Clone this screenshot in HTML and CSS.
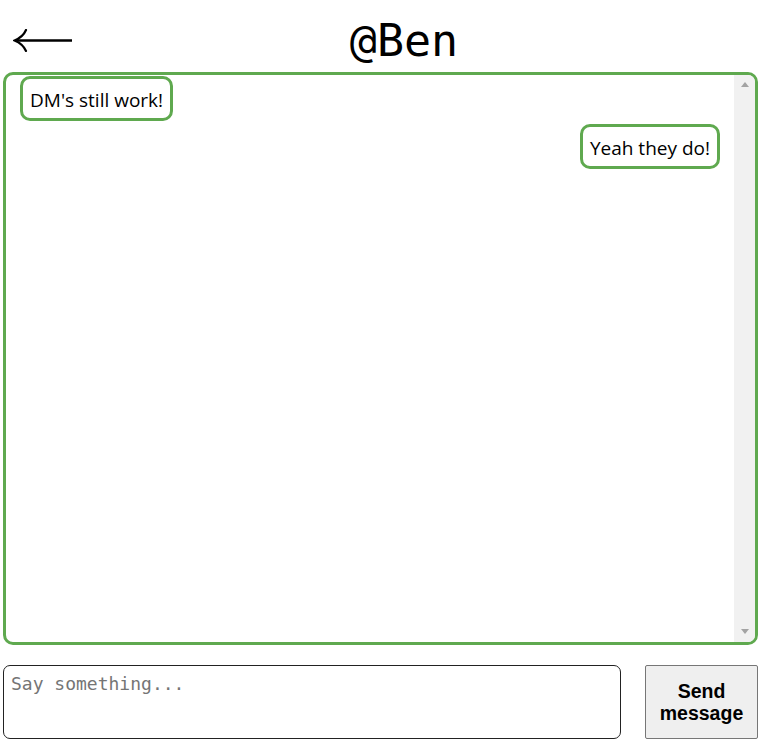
FILE: index.html
```html
<!DOCTYPE html>
<html>
<head>
<meta charset="utf-8">
<link rel="stylesheet" href="styles.css">
</head>
<body>
<div class="page">
  <header class="header">
    <svg class="back" width="60" height="23" viewBox="0 0 60 23" aria-label="Back">
      <path d="M13,1 Q10,8 1.5,11.5 Q10,15 13,22" fill="none" stroke="#000" stroke-width="2.2" stroke-linecap="round"/>
      <line x1="2" y1="11.5" x2="59" y2="11.5" stroke="#000" stroke-width="2.4"/>
    </svg>
    <h1 class="title">@Ben</h1>
  </header>
  <section class="chat">
    <div class="messages">
      <div class="bubble left">DM's still work!</div>
      <div class="bubble right">Yeah they do!</div>
    </div>
    <div class="scrollbar">
      <span class="arrow up"></span>
      <span class="arrow down"></span>
    </div>
  </section>
  <form class="composer">
    <textarea class="input" placeholder="Say something..."></textarea>
    <button type="button" class="send">Send message</button>
  </form>
</div>
</body>
</html>
```
FILE: styles.css
```css
html, body {
  margin: 0;
  padding: 0;
  background: #fff;
}
.page {
  width: 755px;
  margin-left: 3px;
  display: flex;
  flex-direction: column;
}
.header {
  height: 72px;
  box-sizing: border-box;
  display: flex;
  align-items: flex-start;
  padding-top: 15px;
}
.back {
  display: block;
  margin-left: 10px;
  margin-top: 14px;
  flex: none;
}
.title {
  flex: 1;
  margin: 0;
  padding-right: 23px;
  text-align: center;
  font-family: "DejaVu Sans Mono", monospace;
  font-weight: normal;
  font-size: 45px;
  line-height: 52px;
  color: #000;
}
.chat {
  height: 573px;
  box-sizing: border-box;
  border: 3px solid #5fa94f;
  border-radius: 10px;
  display: flex;
  overflow: hidden;
}
.messages {
  flex: 1;
  padding: 1px 14px;
  display: flex;
  flex-direction: column;
  gap: 3px;
}
.bubble {
  border: 3px solid #5fa94f;
  border-radius: 10px;
  padding: 9px 7px 6px;
  font-family: "Open Sans", sans-serif;
  font-size: 19px;
  line-height: 24px;
  color: #000;
}
.left { align-self: flex-start; }
.right { align-self: flex-end; }
.scrollbar {
  width: 21px;
  flex: none;
  background: #f1f1f1;
  display: flex;
  flex-direction: column;
  justify-content: space-between;
  align-items: center;
  padding: 7px 0 8px;
  box-sizing: border-box;
}
.arrow {
  width: 0;
  height: 0;
  border-left: 4.5px solid transparent;
  border-right: 4.5px solid transparent;
}
.up { border-bottom: 5px solid #a3a3a3; }
.down { border-top: 5px solid #a3a3a3; }
.composer {
  margin: 20px 0 0;
  display: flex;
  gap: 24px;
}
.input {
  flex: 1;
  height: 74px;
  box-sizing: border-box;
  border: 1px solid #222;
  border-radius: 7px;
  padding: 7px;
  resize: none;
  font-family: "DejaVu Sans Mono", monospace;
  font-size: 18px;
  color: #000;
  margin: 0;
}
.input::placeholder { color: #757575; }
.send {
  width: 113px;
  height: 74px;
  box-sizing: border-box;
  margin: 0;
  background: #efefef;
  border: 1px solid #767676;
  border-radius: 2px;
  font-family: "Liberation Sans", Arial, sans-serif;
  font-weight: bold;
  font-size: 19.5px;
  line-height: 22px;
  color: #000;
  padding: 0 6px;
}
```
